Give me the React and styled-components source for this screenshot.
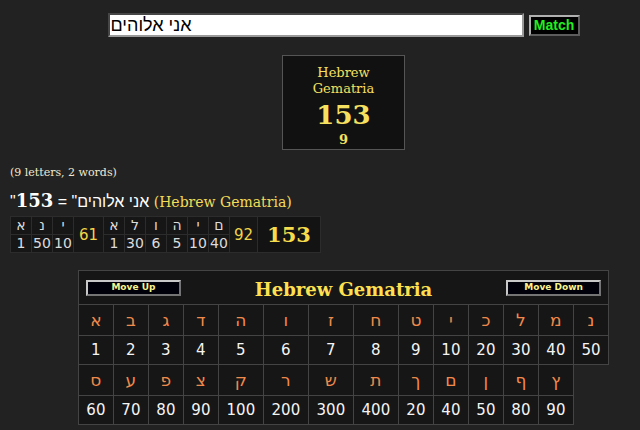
import React, { useState } from "react";
import styled, { createGlobalStyle } from "styled-components";

const GlobalStyle = createGlobalStyle`
  html, body {
    margin: 0;
    padding: 0;
    background: #222222;
  }
  body {
    font-family: "DejaVu Sans", sans-serif;
    color: #e8e8e8;
  }
`;

const Page = styled.div`
  width: 640px;
  padding-top: 13px;
  box-sizing: border-box;
`;

const Center = styled.div`
  display: flex;
  justify-content: center;
  padding-left: 47px;
  margin-top: ${(p) => p.$top || 0}px;
`;

const SearchRow = styled.div`
  display: flex;
  align-items: center;
  gap: 5px;
`;

const SearchInput = styled.input`
  width: 416px;
  height: 24px;
  box-sizing: border-box;
  border: 2px inset #9a9a9a;
  background: #fff;
  padding: 0 1px;
  font-family: "Liberation Sans", Arial, sans-serif;
  font-size: 18px;
  color: #000;
  outline: none;
`;

const MatchButton = styled.button`
  width: 51px;
  height: 21px;
  box-sizing: border-box;
  background: #000;
  border: 2px outset #b0b0b0;
  color: #22ee22;
  font-family: "Liberation Sans", Arial, sans-serif;
  font-weight: bold;
  font-size: 14px;
  padding: 0;
  line-height: 1;
`;

const ResultBox = styled.div`
  width: 123px;
  height: 95px;
  box-sizing: border-box;
  border: 1px solid #555;
  background: #111;
  display: flex;
  flex-direction: column;
  align-items: center;
  justify-content: center;
  font-family: "DejaVu Serif", serif;
  color: #f6e060;
  padding-top: 8px;
`;

const BoxLabel = styled.div`
  font-size: 13px;
  line-height: 16px;
  text-align: center;
`;

const BoxValue = styled.div`
  font-size: 26px;
  font-weight: bold;
  line-height: 34px;
  margin-top: 1px;
`;

const BoxReduced = styled.div`
  font-size: 13px;
  font-weight: bold;
  line-height: 16px;
`;

const WordCount = styled.div`
  margin: 16px 0 0 10px;
  font-family: "DejaVu Serif", serif;
  font-size: 11px;
  color: #f2ead0;
`;

const Equation = styled.div`
  margin: 11px 0 0 10px;
  font-family: "Liberation Sans", Arial, sans-serif;
  font-size: 16px;
  color: #fff;
  line-height: 22px;
`;

const EqNumber = styled.b`
  font-family: "DejaVu Serif", serif;
  font-size: 18px;
`;

const EqCipher = styled.span`
  font-family: "DejaVu Serif", serif;
  font-size: 14px;
  color: #f2dc58;
`;

const Breakdown = styled.table`
  margin: 3px 0 0 10px;
  border-collapse: collapse;
`;

const BCell = styled.td`
  width: 20px;
  height: 17px;
  padding: 0;
  background: #161616;
  border: 1px solid #2c2c2c;
  text-align: center;
  font-size: 14px;
  color: #dcdcdc;
  line-height: 17px;
`;

const BSum = styled.td`
  width: ${(p) => p.$w}px;
  padding: 0;
  background: #161616;
  border: 1px solid #2c2c2c;
  text-align: center;
  font-size: 15px;
  color: #f2d448;
`;

const BTotal = styled.td`
  width: 62px;
  padding: 0;
  background: #131313;
  border: 1px solid #2c2c2c;
  text-align: center;
  font-family: "DejaVu Serif", serif;
  font-weight: bold;
  font-size: 21px;
  color: #f6dc4c;
`;

const ChartTable = styled.table`
  border-collapse: collapse;
  table-layout: fixed;
  width: 531px;
`;

const HeaderCell = styled.td`
  height: 33px;
  background: #161616;
  border: 1px solid #444;
  padding: 0 7px;
`;

const HeaderBar = styled.div`
  display: flex;
  align-items: center;
  justify-content: space-between;
`;

const MoveButton = styled.button`
  width: 95px;
  height: 16px;
  box-sizing: border-box;
  background: #00000a;
  border: 2px outset #c8c8c8;
  color: #f8f48a;
  font-family: "DejaVu Sans", Verdana, sans-serif;
  font-weight: bold;
  font-size: 9px;
  padding: 0;
  line-height: 1;
`;

const ChartTitle = styled.div`
  font-family: "DejaVu Serif", serif;
  font-weight: bold;
  font-size: 18px;
  color: #ffe050;
  padding-top: 3px;
`;

const Cell = styled.td`
  height: ${(p) => (p.$letter ? 30 : 28)}px;
  padding: 0;
  background: #161616;
  border: 1px solid #444;
  text-align: center;
  font-size: ${(p) => (p.$letter ? 17 : 15)}px;
  color: ${(p) => (p.$letter ? "#f08a4c" : "#f4f4f4")};
`;

const letters1 = [
  ["א", 1], ["ב", 2], ["ג", 3], ["ד", 4], ["ה", 5], ["ו", 6], ["ז", 7],
  ["ח", 8], ["ט", 9], ["י", 10], ["כ", 20], ["ל", 30], ["מ", 40], ["נ", 50],
];
const letters2 = [
  ["ס", 60], ["ע", 70], ["פ", 80], ["צ", 90], ["ק", 100], ["ר", 200],
  ["ש", 300], ["ת", 400], ["ך", 20], ["ם", 40], ["ן", 50], ["ף", 80], ["ץ", 90],
];
const colWidths = [35, 35, 35, 35, 45, 45, 45, 45, 35, 35, 35, 35, 35, 35];

const words = [
  { letters: [["א", 1], ["נ", 50], ["י", 10]], sum: 61, w: 29 },
  {
    letters: [["א", 1], ["ל", 30], ["ו", 6], ["ה", 5], ["י", 10], ["ם", 40]],
    sum: 92,
    w: 27,
  },
];

export default function App() {
  const [query, setQuery] = useState("אני אלוהים");

  return (
    <>
      <GlobalStyle />
      <Page>
        <Center>
          <SearchRow>
            <SearchInput value={query} onChange={(e) => setQuery(e.target.value)} />
            <MatchButton>Match</MatchButton>
          </SearchRow>
        </Center>
        <Center $top={18}>
          <ResultBox>
            <BoxLabel>
              Hebrew
              <br />
              Gematria
            </BoxLabel>
            <BoxValue>153</BoxValue>
            <BoxReduced>9</BoxReduced>
          </ResultBox>
        </Center>
        <WordCount>(9 letters, 2 words)</WordCount>
        <Equation>
          "{query}" = <EqNumber>153</EqNumber> <EqCipher>(Hebrew Gematria)</EqCipher>
        </Equation>
        <Breakdown>
          <tbody>
            <tr>
              {words.map((word, i) => (
                <React.Fragment key={i}>
                  {word.letters.map(([l], j) => (
                    <BCell key={j}>{l}</BCell>
                  ))}
                  <BSum rowSpan={2} $w={word.w}>
                    {word.sum}
                  </BSum>
                </React.Fragment>
              ))}
              <BTotal rowSpan={2}>153</BTotal>
            </tr>
            <tr>
              {words.map((word, i) =>
                word.letters.map(([, v], j) => <BCell key={i + "-" + j}>{v}</BCell>)
              )}
            </tr>
          </tbody>
        </Breakdown>
        <Center $top={17}>
          <ChartTable>
            <colgroup>
              {colWidths.map((w, i) => (
                <col key={i} style={{ width: w }} />
              ))}
            </colgroup>
            <tbody>
              <tr>
                <HeaderCell colSpan={14}>
                  <HeaderBar>
                    <MoveButton>Move Up</MoveButton>
                    <ChartTitle>Hebrew Gematria</ChartTitle>
                    <MoveButton>Move Down</MoveButton>
                  </HeaderBar>
                </HeaderCell>
              </tr>
              <tr>
                {letters1.map(([l]) => (
                  <Cell key={l} $letter>
                    {l}
                  </Cell>
                ))}
              </tr>
              <tr>
                {letters1.map(([l, v]) => (
                  <Cell key={l}>{v}</Cell>
                ))}
              </tr>
              <tr>
                {letters2.map(([l]) => (
                  <Cell key={l} $letter>
                    {l}
                  </Cell>
                ))}
              </tr>
              <tr>
                {letters2.map(([l, v]) => (
                  <Cell key={l}>{v}</Cell>
                ))}
              </tr>
            </tbody>
          </ChartTable>
        </Center>
      </Page>
    </>
  );
}
